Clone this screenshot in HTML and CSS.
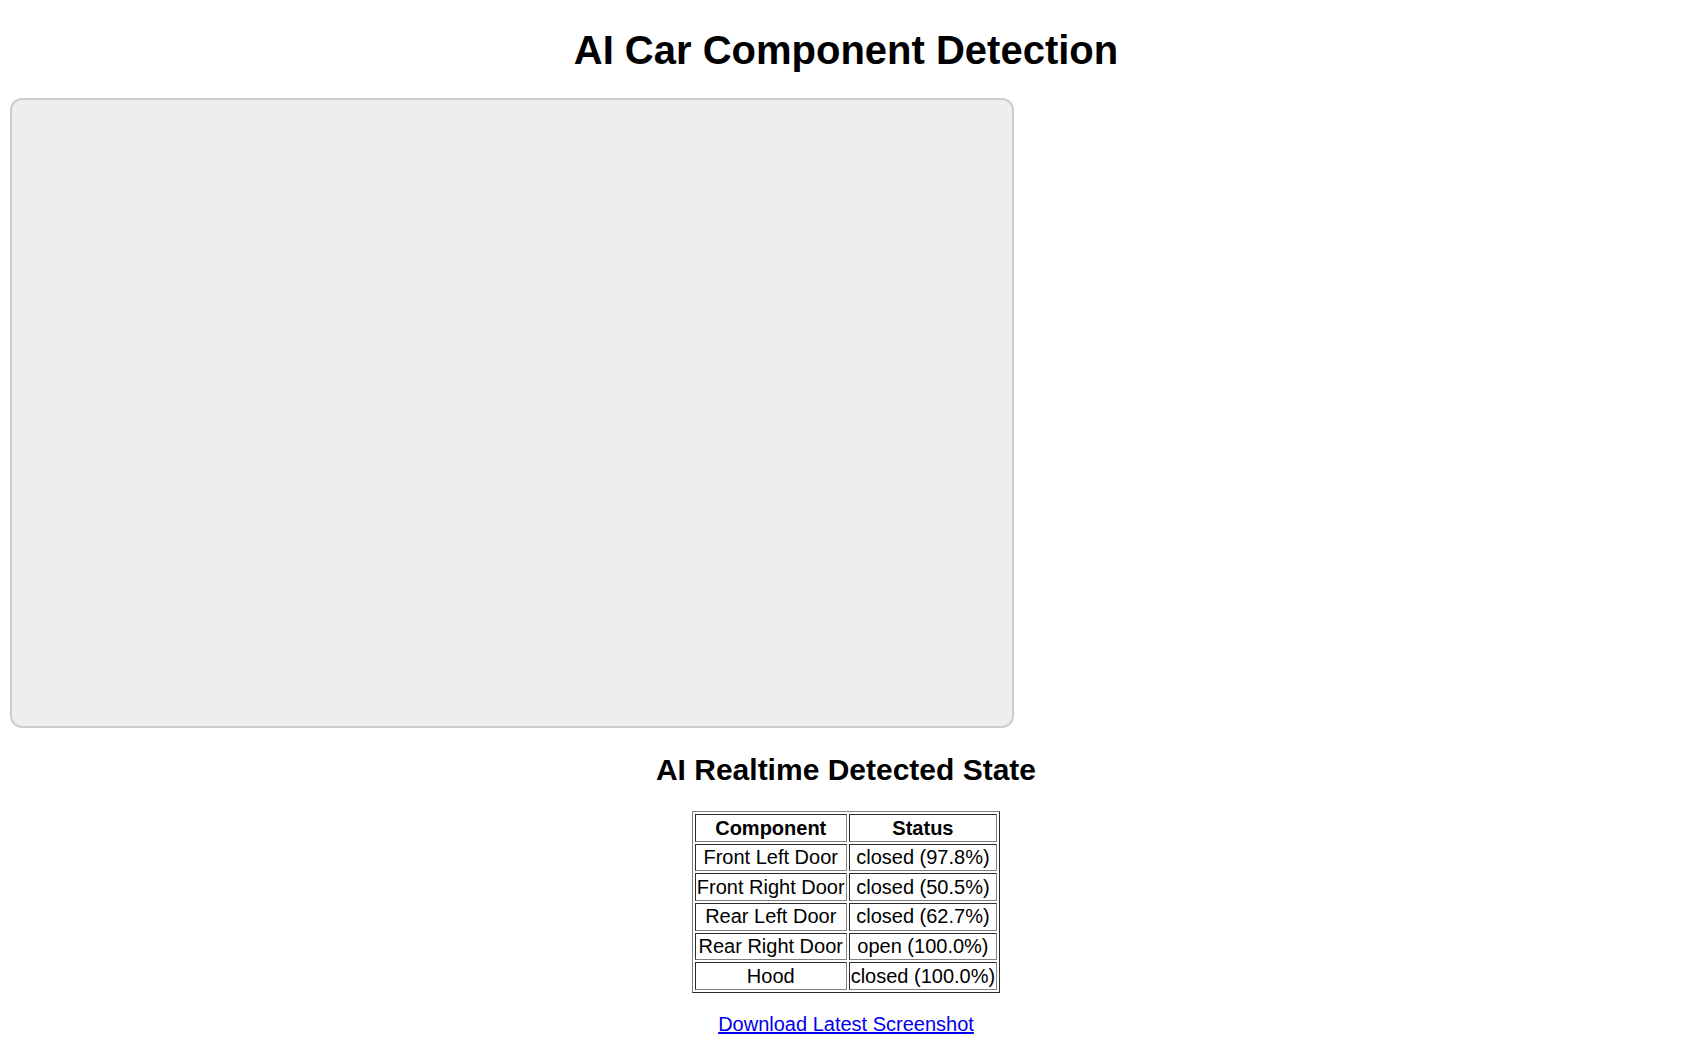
FILE: index.html
```html
<!DOCTYPE html>
<html lang="en">
<head>
<meta charset="utf-8">
<title>AI Car Component Detection</title>
<link rel="stylesheet" href="styles.css">
</head>
<body>
<h1 class="title">AI Car Component Detection</h1>
<div class="feed"></div>
<h2 class="subtitle">AI Realtime Detected State</h2>
<table class="state">
  <tr><th>Component</th><th>Status</th></tr>
  <tr><td>Front Left Door</td><td>closed (97.8%)</td></tr>
  <tr><td>Front Right Door</td><td>closed (50.5%)</td></tr>
  <tr><td>Rear Left Door</td><td>closed (62.7%)</td></tr>
  <tr><td>Rear Right Door</td><td>open (100.0%)</td></tr>
  <tr><td>Hood</td><td>closed (100.0%)</td></tr>
</table>
<p class="download"><a href="#">Download Latest Screenshot</a></p>
</body>
</html>
```
FILE: styles.css
```css
html, body {
  background: #fff;
}
body {
  margin: 0 10px 10px;
  padding: 0;
  font-family: "Liberation Sans", Arial, sans-serif;
  font-size: 20px;
  color: #000;
  text-align: center;
}
.title {
  font-size: 40px;
  font-weight: bold;
  line-height: 46px;
  margin: 26.8px 0 25.2px;
}
.feed {
  width: 1000px;
  height: 626px;
  background: #eeeeee;
  border: 2px solid #cccccc;
  border-radius: 12px;
}
.subtitle {
  font-size: 30px;
  font-weight: bold;
  line-height: 34.5px;
  margin: 25.4px 0 23.4px;
}
.state {
  margin: 0 auto;
  border: 1px outset gray;
  border-spacing: 2px;
  font-size: 20px;
}
.state th,
.state td {
  border: 1px inset gray;
  padding: 1.3px 1px;
  line-height: 23px;
  text-align: center;
}
.state th {
  font-weight: bold;
}
.download {
  margin: 20px 0;
  line-height: 23px;
}
.download a {
  color: #0000ee;
  text-decoration: underline;
}
```
